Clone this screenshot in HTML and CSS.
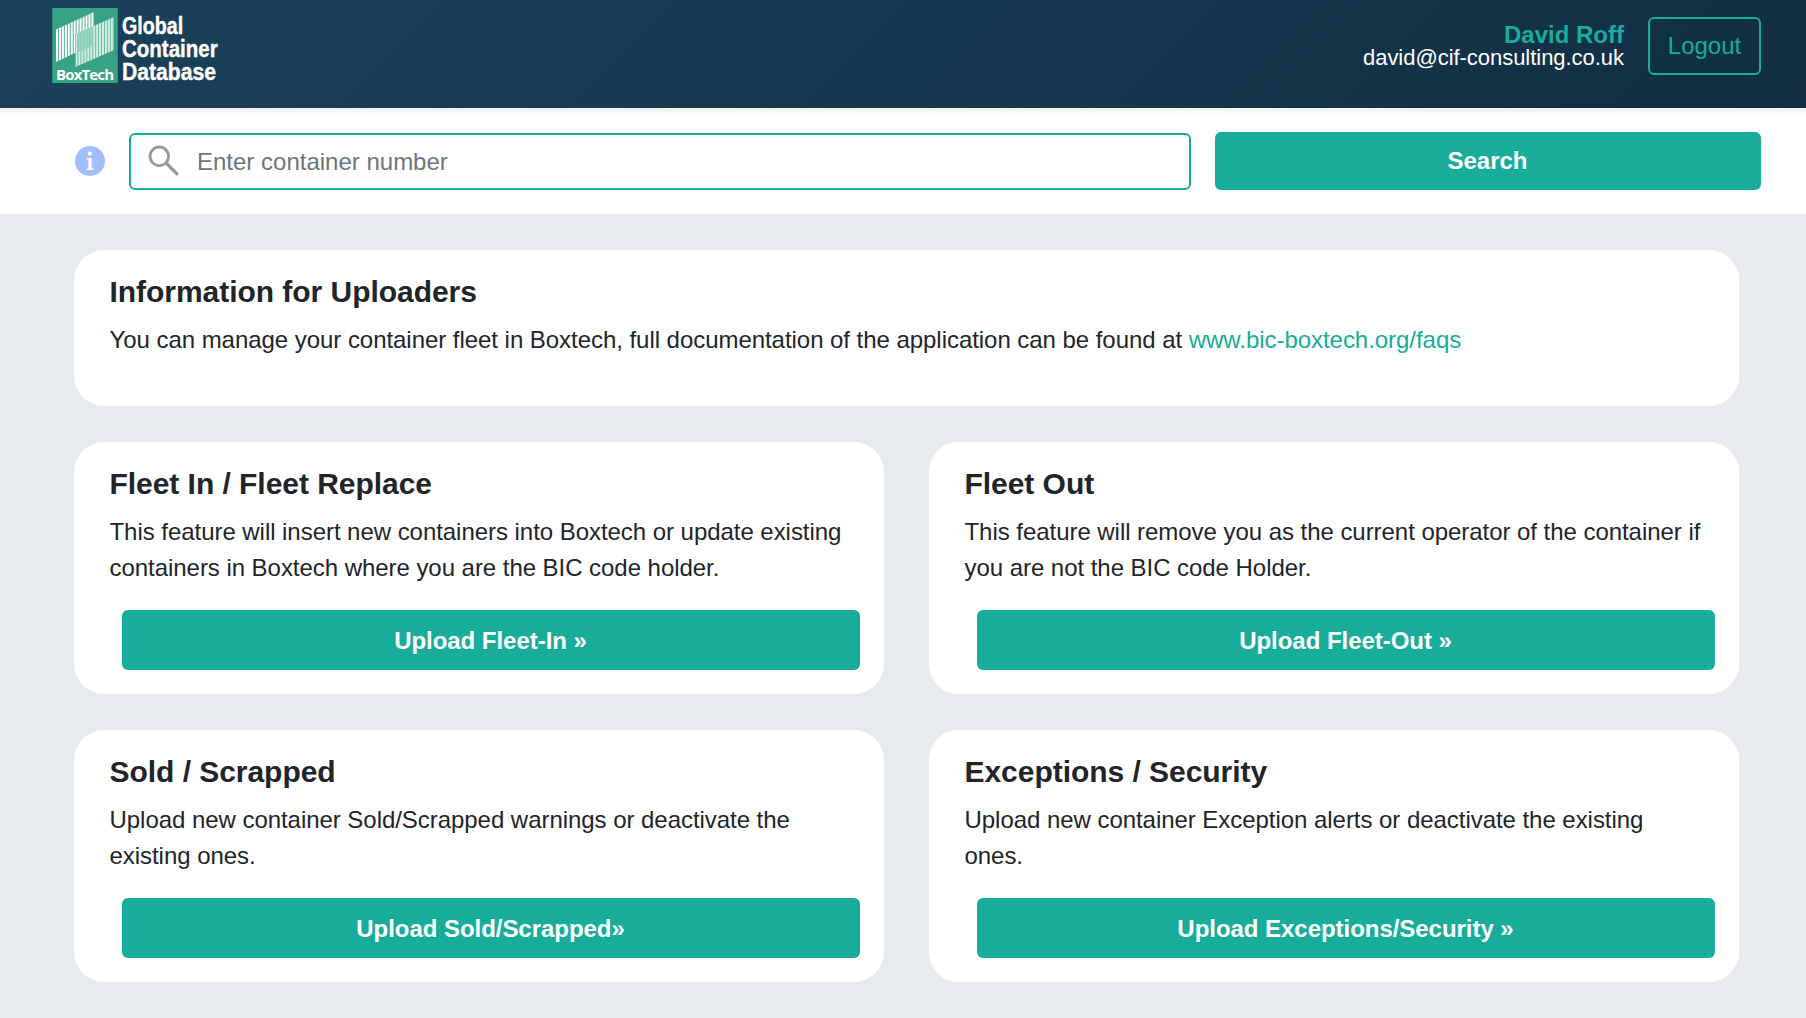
FILE: index.html
```html
<!DOCTYPE html>
<html lang="en">
<head>
<meta charset="utf-8">
<title>BoxTech Global Container Database</title>
<link rel="stylesheet" href="styles.css">
</head>
<body>
<header class="header">
  <svg class="logo" width="220" height="90" viewBox="0 0 220 90" role="img">
    <defs>
      <pattern id="bars" width="2.95" height="75" patternUnits="userSpaceOnUse" x="4">
        <rect width="2.1" height="75" fill="#fff"/>
      </pattern>
      <pattern id="barsLight" width="2.95" height="75" patternUnits="userSpaceOnUse" x="23.5">
        <rect width="2.1" height="75" fill="#d3ede3"/>
      </pattern>
    </defs>
    <rect width="66" height="75" fill="#38a382"/>
    <path d="M.5 0v75M65.5 0v75" stroke="#2c9076"/>
    <path d="M4 21.5 42 4v32L4 54z" fill="url(#bars)"/>
    <path d="M23.5 26 62 9v33L23.5 59z" fill="#38a382"/>
    <path d="M23.5 26 62 9v33L23.5 59z" fill="#76c3aa" opacity=".5"/>
    <path d="M23.5 26 62 9v33L23.5 59z" fill="url(#barsLight)"/>
    <path d="M25 13 42 4v14.2L25 25.5z" fill="#38a382"/>
    <path d="M25 13 42 4v14.2L25 25.5z" fill="url(#bars)"/>
    <path d="M25 25.5 41 18.5v19.2L25 45z" fill="#8bcdb6" opacity=".75"/>
    <text class="logo-brand" x="4" y="71.5" textLength="58">BoxTech</text>
    <text class="logo-name" transform="translate(70 25.5) scale(.82 1)">Global</text>
    <text class="logo-name" transform="translate(70 48.5) scale(.855 1)">Container</text>
    <text class="logo-name" transform="translate(70 71.5) scale(.88 1)">Database</text>
  </svg>
  <div class="account">
    <div class="user">
      <strong class="user-name">David Roff</strong>
      <span class="user-mail">david@cif-consulting.co.uk</span>
    </div>
    <button class="logout">Logout</button>
  </div>
</header>
<section class="search">
  <svg class="info" width="30" height="30" viewBox="0 0 30 30">
    <circle cx="15" cy="15" r="15" fill="#a1beff"/>
    <circle cx="14.8" cy="7.6" r="2.1" fill="#fff"/>
    <path d="M11.6 12h5.1v10.3l1.8.4v1.3h-7v-1.3l1.9-.4v-8.5l-1.8-.4z" fill="#fff"/>
  </svg>
  <label class="field">
    <svg class="glass" width="32" height="32" viewBox="0 0 32 32" fill="none" stroke="#999">
      <circle cx="11.3" cy="11.3" r="9.3" stroke-width="2.8"/>
      <path d="M17.5 17.5 30 29.8" stroke-width="3.2"/>
    </svg>
    <input class="input" type="text" placeholder="Enter container number">
  </label>
  <button class="button search-button">Search</button>
</section>
<main class="cards">
  <article class="card card-wide">
    <h2 class="title">Information for Uploaders</h2>
    <p class="text">You can manage your container fleet in Boxtech, full documentation of the application can be found at <a class="link" href="#">www.bic-boxtech.org/faqs</a></p>
  </article>
  <article class="card">
    <h2 class="title">Fleet In / Fleet Replace</h2>
    <p class="text">This feature will insert new containers into Boxtech or update existing<br>containers in Boxtech where you are the BIC code holder.</p>
    <button class="button">Upload Fleet-In »</button>
  </article>
  <article class="card">
    <h2 class="title">Fleet Out</h2>
    <p class="text">This feature will remove you as the current operator of the container if<br>you are not the BIC code Holder.</p>
    <button class="button">Upload Fleet-Out »</button>
  </article>
  <article class="card">
    <h2 class="title">Sold / Scrapped</h2>
    <p class="text">Upload new container Sold/Scrapped warnings or deactivate the<br>existing ones.</p>
    <button class="button">Upload Sold/Scrapped»</button>
  </article>
  <article class="card">
    <h2 class="title">Exceptions / Security</h2>
    <p class="text">Upload new container Exception alerts or deactivate the existing<br>ones.</p>
    <button class="button">Upload Exceptions/Security »</button>
  </article>
</main>
</body>
</html>
```
FILE: styles.css
```css
* { box-sizing: border-box; }
body {
  margin: 0;
  min-height: 1018px;
  background: #e7ebee;
  color: #212529;
  font: 24px/36px "Liberation Sans", Arial, sans-serif;
}
button, input { font: inherit; }
.header {
  display: flex;
  justify-content: space-between;
  align-items: flex-start;
  height: 108px;
  padding: 8px 45px 0 52px;
  background: linear-gradient(135deg, #1b425b, #112e43);
}
.logo text { fill: #fff; font-weight: bold; }
.logo .logo-brand { font: bold 15px "Open Sans", sans-serif; }
.logo .logo-name { font-size: 24px; stroke: #fff; stroke-width: .4px; }
.account { display: flex; gap: 24px; padding-top: 9px; }
.user {
  display: flex;
  flex-direction: column;
  align-items: flex-end;
  padding-top: 6px;
  line-height: 23px;
}
.user-name { color: #17ad9a; }
.user-mail { color: #fff; font-size: 22px; letter-spacing: -.04px; }
.logout {
  width: 113px;
  height: 58px;
  padding: 0;
  border: 2px solid #17ad9a;
  border-radius: 6px;
  background: none;
  color: #17ad9a;
}
.search {
  display: flex;
  align-items: center;
  height: 106px;
  padding: 0 45px 0 75px;
  background: linear-gradient(#f0f0f0, #fff 8px);
}
.info { margin-right: 24px; }
.field {
  display: flex;
  align-items: center;
  width: 1062px;
  height: 57px;
  margin-right: 24px;
  padding-left: 17px;
  border: 2px solid #17ad9a;
  border-radius: 6px;
  background: #fff;
}
.glass { margin-right: 17px; }
.input { flex: 1; border: 0; padding: 2px 0 0; outline: 0; background: none; }
.input::placeholder { color: #6c757d; opacity: 1; }
.button {
  display: block;
  height: 60px;
  padding: 2px 1px 0 0;
  border: 0;
  border-radius: 6px;
  background: #17ad9a;
  color: #fff;
  font-weight: bold;
  letter-spacing: -.04px;
}
.search-button { flex: 1; height: 58px; padding: 0 1px 0 0; }
.cards {
  display: grid;
  grid-template-columns: 1fr 1fr;
  gap: 36px 45px;
  padding: 36px 67px 36px 74px;
}
.card { padding: 24px 24px 24px 35.5px; border-radius: 30px; background: #fff; }
.card-wide { grid-column: 1 / -1; height: 156px; }
.title { margin: 0 0 12px; font-size: 30px; line-height: 36px; letter-spacing: -.04px; }
.text { margin: 0; white-space: nowrap; letter-spacing: -.045px; }
.link { color: #17ad9a; text-decoration: none; }
.card .button { width: calc(100% - 12.5px); margin: 24px 0 0 12.5px; }
```
